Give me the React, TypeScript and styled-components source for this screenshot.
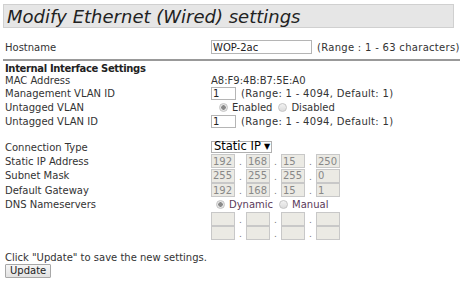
import React from "react";
import styled, { createGlobalStyle } from "styled-components";

const Global = createGlobalStyle`
  html, body { margin: 0; padding: 0; background: #fff; }
  body { font-family: "DejaVu Sans", Verdana, sans-serif; font-size: 10px; color: #333; }
`;

const Page = styled.div`
  padding: 4px 3px 0 3px;
  width: 457px;
  box-sizing: border-box;
`;

const TitleBar = styled.div`
  height: 24px;
  background: #e6e6e6;
  border: 1px solid #d0d0d0;
  box-sizing: border-box;
  display: flex;
  align-items: center;
  padding-left: 3px;
  font-style: italic;
  font-size: 18px;
  color: #222;
  white-space: nowrap;
`;

const Grid = styled.div`
  display: grid;
  grid-template-columns: 206px 1fr;
  padding-left: 2px;
`;

const Row = styled.div<{ $h?: number }>`
  display: contents;
  & > * { height: ${(p) => p.$h ?? 14}px; }
`;

const Label = styled.div<{ $bold?: boolean }>`
  display: flex;
  align-items: center;
  white-space: nowrap;
  font-weight: ${(p) => (p.$bold ? "bold" : "normal")};
  letter-spacing: ${(p) => (p.$bold ? "-0.35px" : "0")};
  color: ${(p) => (p.$bold ? "#222" : "#333")};
`;

const Value = styled.div`
  display: flex;
  align-items: center;
  white-space: nowrap;
`;

const Spacer = styled.div<{ $h: number }>`
  grid-column: 1 / -1;
  height: ${(p) => p.$h}px;
`;

const Rule = styled.div`
  grid-column: 1 / -1;
  margin-left: -2px;
  height: 2px;
  background: #999;
  margin-top: 5px;
  margin-bottom: 2px;
`;

const TextInput = styled.input<{ $w: number; $h?: number }>`
  width: ${(p) => p.$w}px;
  height: ${(p) => p.$h ?? 13}px !important;
  box-sizing: border-box;
  border: 1px solid #b5b5b5;
  padding: 0 1px;
  font-family: "DejaVu Sans", Verdana, sans-serif;
  font-size: 10px;
  color: #222;
  margin: 0 5px 0 0;
  outline: none;
`;

const Hint = styled.span`
  color: #333;
  letter-spacing: 0.3px;
`;

const RadioGroup = styled.div<{ $indent: number }>`
  display: flex;
  align-items: center;
  padding-left: ${(p) => p.$indent}px;
`;

const RadioDot = styled.span<{ $on?: boolean }>`
  width: 9px;
  height: 9px;
  border-radius: 50%;
  box-sizing: border-box;
  border: 1px solid #c4c4c4;
  background: ${(p) =>
    p.$on
      ? "radial-gradient(circle, #8a8a8a 0 2px, #e6e6e6 2.5px)"
      : "linear-gradient(#f2f2f2, #dcdcdc)"};
  margin-right: 4px;
  flex: none;
`;

const RadioLabel = styled.span<{ $dim?: boolean }>`
  margin-right: 6px;
  color: ${(p) => (p.$dim ? "#5a3a5a" : "#333")};
`;

const Select = styled.div`
  width: 61px;
  height: 12px;
  box-sizing: border-box;
  border: 1px solid #b0b0b0;
  display: flex;
  align-items: center;
  padding-left: 2px;
  font-size: 11.5px;
  color: #000;
  line-height: 1;
  gap: 3px;
`;

const Arrow = styled.span`
  font-size: 8px;
`;

const IpLine = styled.div`
  display: flex;
  align-items: center;
`;

const Octet = styled.div`
  width: 24px;
  height: 14px;
  box-sizing: border-box;
  border: 1px solid #c8c8c8;
  background: #ebeae4;
  color: #888;
  font-size: 10px;
  display: flex;
  align-items: center;
  padding-left: 1px;
`;

const Dot = styled.span`
  width: 11px;
  text-align: center;
  color: #777;
  font-size: 9px;
  line-height: 1;
  padding-top: 3px;
`;

const Footer = styled.div`
  padding: 0 0 0 2px;
  margin-top: 11px;
`;

const FooterText = styled.div`
  color: #333;
  height: 12px;
  line-height: 12px;
`;

const Button = styled.button`
  margin-top: 0;
  height: 14px;
  padding: 0 4px;
  border: 1px solid #a8a8a8;
  border-radius: 1px;
  background: linear-gradient(#f6f6f6, #e2e2e2);
  font-family: "DejaVu Sans", Verdana, sans-serif;
  font-size: 10px;
  color: #222;
  line-height: 1;
`;

const IpRow: React.FC<{ vals: string[] }> = ({ vals }) => (
  <IpLine>
    {vals.map((v, i) => (
      <React.Fragment key={i}>
        {i > 0 && <Dot>.</Dot>}
        <Octet>{v}</Octet>
      </React.Fragment>
    ))}
  </IpLine>
);

export default function App() {
  return (
    <Page>
      <Global />
      <TitleBar>Modify Ethernet (Wired) settings</TitleBar>
      <Grid>
        <Spacer $h={12} />
        <Row $h={14}>
          <Label>Hostname</Label>
          <Value>
            <TextInput $w={101} $h={14} defaultValue="WOP-2ac" />
            <Hint>(Range : 1 - 63 characters)</Hint>
          </Value>
        </Row>
        <Rule />
        <Row $h={11}>
          <Label $bold>Internal Interface Settings</Label>
          <Value />
        </Row>
        <Row $h={12}>
          <Label>MAC Address</Label>
          <Value>A8:F9:4B:B7:5E:A0</Value>
        </Row>
        <Row $h={14}>
          <Label>Management VLAN ID</Label>
          <Value>
            <TextInput $w={25} defaultValue="1" />
            <Hint>(Range: 1 - 4094, Default: 1)</Hint>
          </Value>
        </Row>
        <Row $h={14}>
          <Label>Untagged VLAN</Label>
          <Value>
            <RadioGroup $indent={8}>
              <RadioDot $on />
              <RadioLabel>Enabled</RadioLabel>
              <RadioDot />
              <RadioLabel>Disabled</RadioLabel>
            </RadioGroup>
          </Value>
        </Row>
        <Row $h={14}>
          <Label>Untagged VLAN ID</Label>
          <Value>
            <TextInput $w={25} defaultValue="1" />
            <Hint>(Range: 1 - 4094, Default: 1)</Hint>
          </Value>
        </Row>
        <Spacer $h={12} />
        <Row $h={14}>
          <Label>Connection Type</Label>
          <Value>
            <Select>
              Static IP<Arrow>▼</Arrow>
            </Select>
          </Value>
        </Row>
        <Row $h={14.5}>
          <Label>Static IP Address</Label>
          <Value>
            <IpRow vals={["192", "168", "15", "250"]} />
          </Value>
        </Row>
        <Row $h={14.5}>
          <Label>Subnet Mask</Label>
          <Value>
            <IpRow vals={["255", "255", "255", "0"]} />
          </Value>
        </Row>
        <Row $h={14.5}>
          <Label>Default Gateway</Label>
          <Value>
            <IpRow vals={["192", "168", "15", "1"]} />
          </Value>
        </Row>
        <Row $h={14}>
          <Label>DNS Nameservers</Label>
          <Value>
            <RadioGroup $indent={5}>
              <RadioDot $on />
              <RadioLabel $dim>Dynamic</RadioLabel>
              <RadioDot />
              <RadioLabel $dim>Manual</RadioLabel>
            </RadioGroup>
          </Value>
        </Row>
        <Row $h={14.5}>
          <Label />
          <Value>
            <IpRow vals={["", "", "", ""]} />
          </Value>
        </Row>
        <Row $h={14.5}>
          <Label />
          <Value>
            <IpRow vals={["", "", "", ""]} />
          </Value>
        </Row>
      </Grid>
      <Footer>
        <FooterText>Click "Update" to save the new settings.</FooterText>
        <Button>Update</Button>
      </Footer>
    </Page>
  );
}
